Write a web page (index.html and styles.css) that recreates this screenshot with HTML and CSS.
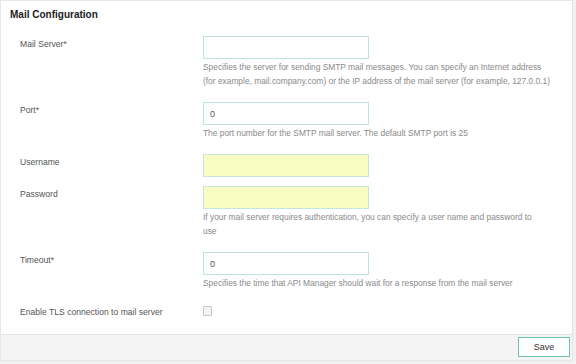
FILE: index.html
```html
<!DOCTYPE html>
<html lang="en">
<head>
    <meta charset="UTF-8">
    <meta name="viewport" content="width=device-width, initial-scale=1.0">
    <title>Mail Configuration</title>
    <link rel="stylesheet" href="styles.css">
</head>
<body>
    <main class="panel">
        <h3 class="panel_title">Mail Configuration</h3>

        <form class="panel_body">
            <div class="form_group">
                <label class="form_label">Mail Server*</label>
                <div class="form_field">
                    <input class="form_input" type="text">
                    <p class="form_help">Specifies the server for sending SMTP mail messages. You can specify an Internet address (for example, mail.company.com) or the IP address of the mail server (for example, 127.0.0.1)</p>
                </div>
            </div>

            <div class="form_group">
                <label class="form_label">Port*</label>
                <div class="form_field">
                    <input class="form_input" type="text" value="0">
                    <p class="form_help">The port number for the SMTP mail server. The default SMTP port is 25</p>
                </div>
            </div>

            <div class="form_group tight">
                <label class="form_label">Username</label>
                <div class="form_field">
                    <input class="form_input filled" type="text">
                </div>
            </div>

            <div class="form_group">
                <label class="form_label">Password</label>
                <div class="form_field">
                    <input class="form_input filled" type="password">
                    <p class="form_help">If your mail server requires authentication, you can specify a user name and password to<br>use</p>
                </div>
            </div>

            <div class="form_group">
                <label class="form_label">Timeout*</label>
                <div class="form_field">
                    <input class="form_input" type="text" value="0">
                    <p class="form_help">Specifies the time that API Manager should wait for a response from the mail server</p>
                </div>
            </div>

            <div class="form_group check_row">
                <label class="form_label">Enable TLS connection to mail server</label>
                <div class="form_field">
                    <input class="form_check" type="checkbox">
                </div>
            </div>
        </form>

        <div class="panel_footer">
            <button class="btn_save" type="button">Save</button>
        </div>
    </main>
</body>
</html>
```

FILE: styles.css
```css
* {
    margin: 0;
    padding: 0;
    box-sizing: border-box;
}

body {
    background-color: #f1f1f1;
    font-family: 'Liberation Sans', Arial, sans-serif;
    color: #555;
}

.panel {
    width: 573px;
    height: 361px;
    background-color: #fff;
    border: 1px solid #e6e6e6;
    display: flex;
    flex-direction: column;
}

.panel_title {
    flex-shrink: 0;
    font-size: 10px;
    font-weight: bold;
    color: #222;
    padding: 8px 0 0 9px;
    height: 35px;
}

.panel_body {
    flex: 1;
    padding-left: 19px;
}

.form_group {
    display: flex;
    margin-bottom: 14px;
}

.form_group.tight {
    margin-bottom: 9px;
}

.form_label {
    width: 183px;
    font-size: 8.6px;
    padding-top: 3px;
    color: #555;
}

.form_field {
    flex: 1;
}

.form_input {
    display: block;
    width: 166px;
    height: 23px;
    border: 1px solid #bfe4dc;
    background-color: #fff;
    font-family: inherit;
    font-size: 9px;
    color: #555;
    padding: 0 6px;
    outline: none;
}

.form_input.filled {
    background-color: #fafdc2;
    border-color: #c6e7d5;
}

.form_help {
    max-width: 352px;
    margin-top: 1px;
    font-size: 8.4px;
    line-height: 14px;
    color: #8a8a8a;
}

.check_row .form_label {
    padding-top: 3px;
}

.form_check {
    appearance: none;
    display: block;
    width: 9px;
    height: 10px;
    margin-top: 2px;
    border: 1px solid #c9c9c9;
    border-radius: 1px;
    background-color: #f4f4f4;
}

.panel_footer {
    flex-shrink: 0;
    height: 26px;
    background-color: #f4f4f4;
    border-top: 1px solid #e3e3e3;
    display: flex;
    justify-content: flex-end;
    padding: 2px 2px 0 0;
}

.btn_save {
    width: 52px;
    height: 20px;
    background-color: #fff;
    border: 1px solid #6cc4b0;
    font-family: inherit;
    font-size: 9px;
    color: #333;
}
```
